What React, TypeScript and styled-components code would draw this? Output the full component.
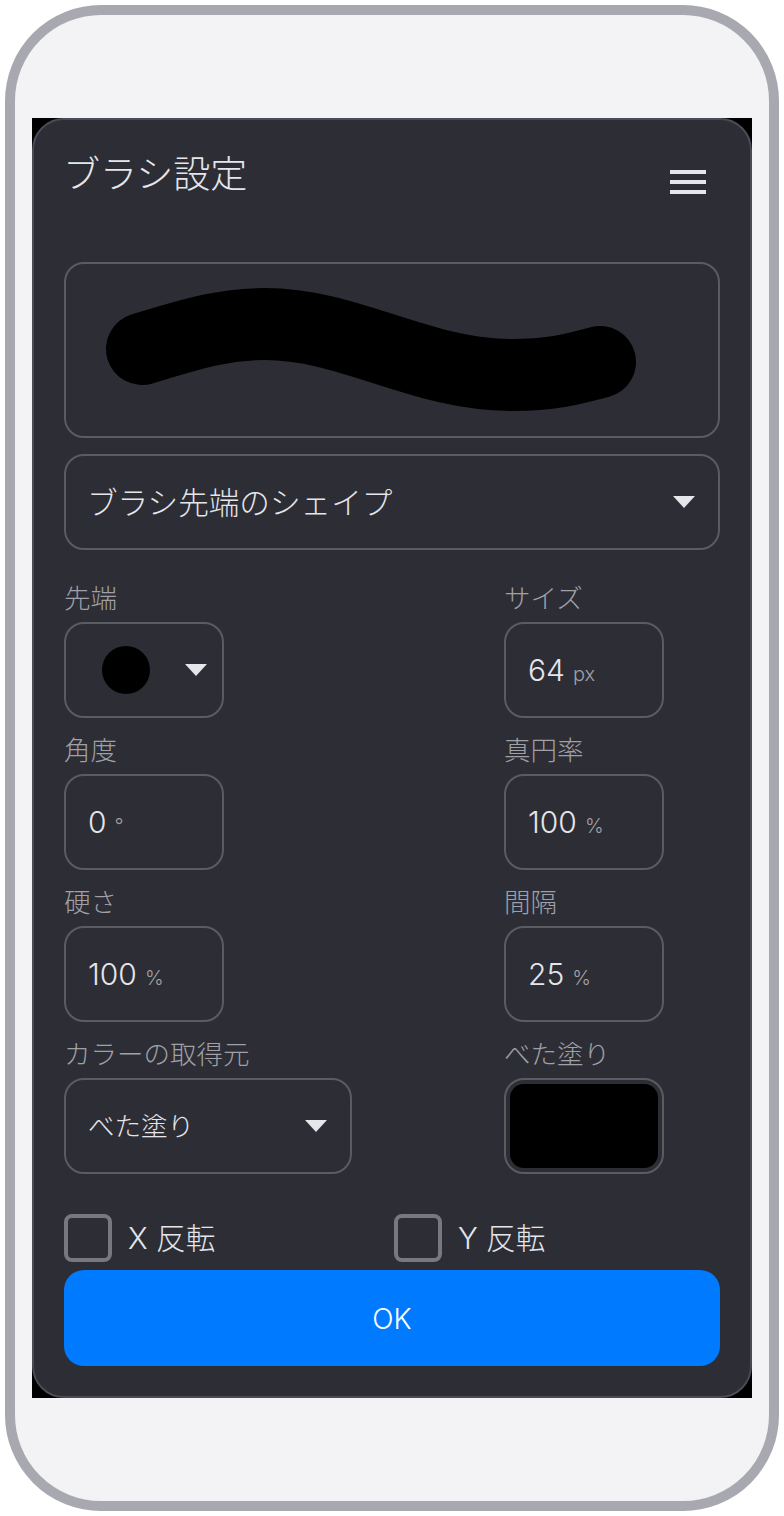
import React from "react";
import styled, { createGlobalStyle } from "styled-components";

const Global = createGlobalStyle`
  html, body { margin: 0; padding: 0; background: #fff; }
  body { font-family: Inter, "Noto Sans CJK JP", sans-serif; }
`;

const Phone = styled.div`
  box-sizing: border-box;
  width: 774px;
  height: 1506px;
  margin: 5px;
  border: 10px solid #a8a8b0;
  border-radius: 96px;
  background: #f3f3f6;
  padding-top: 103px;
  padding-left: 17px;
`;

const Backdrop = styled.div`
  width: 720px;
  height: 1280px;
  background: #000;
`;

const Panel = styled.div`
  box-sizing: border-box;
  height: 100%;
  display: flex;
  flex-direction: column;
  padding: 0 30px;
  background: #2c2d35;
  border: 2px solid #4a4b57;
  border-radius: 32px;
`;

const Header = styled.header`
  height: 142px;
  flex: none;
  display: flex;
  justify-content: space-between;
  align-items: flex-start;
`;

const Title = styled.h1`
  margin: 33px 0 0 -1px;
  font-size: 37px;
  line-height: 44px;
  font-weight: 300;
  color: #e5e5ea;
`;

const Burger = styled.div`
  width: 36px;
  height: 24px;
  margin: 50px 14px 0 0;
  display: flex;
  flex-direction: column;
  justify-content: space-between;
  & > i { display: block; height: 4px; background: #e5e5ea; }
`;

const Preview = styled.div`
  box-sizing: border-box;
  height: 176px;
  flex: none;
  border: 2px solid #5a5b63;
  border-radius: 20px;
  overflow: hidden;
  & > svg { display: block; margin: -2px; }
`;

const Caret = styled.span`
  width: 0;
  height: 0;
  flex: none;
  border-left: 11.5px solid transparent;
  border-right: 11.5px solid transparent;
  border-top: 12px solid #e5e5ea;
`;

const ShapeSelect = styled.div`
  box-sizing: border-box;
  height: 96px;
  flex: none;
  margin-top: 16px;
  padding: 0 23px 0 21px;
  display: flex;
  align-items: center;
  justify-content: space-between;
  border: 2px solid #5a5b63;
  border-radius: 20px;
  font-size: 30.6px;
  font-weight: 300;
  color: #e5e5ea;
`;

const ShapeText = styled.span`
  margin-bottom: 3px;
`;

const Grid = styled.div`
  margin-top: 30px;
  display: grid;
  grid-template-columns: 440px 216px;
  row-gap: 14px;
`;

const Cell = styled.div`
  display: flex;
  flex-direction: column;
  align-items: flex-start;
`;

const Label = styled.label`
  height: 36px;
  margin-bottom: 6px;
  font-size: 26.5px;
  line-height: 36px;
  font-weight: 300;
  color: #a0a0a6;
  white-space: nowrap;
`;

const Field = styled.div<{ $w?: number }>`
  box-sizing: border-box;
  width: ${(p) => p.$w ?? 160}px;
  height: 96px;
  padding: 0 22px;
  display: flex;
  align-items: center;
  justify-content: space-between;
  border: 2px solid #5a5b63;
  border-radius: 20px;
  color: #e5e5ea;
`;

const Value = styled.div`
  display: flex;
  align-items: baseline;
  gap: 8px;
  font-size: 30px;
  font-weight: 350;
`;

const Unit = styled.span`
  font-size: 20px;
  font-weight: 300;
  color: #a0a0a6;
`;

const Tip = styled.span`
  width: 48px;
  height: 48px;
  margin-left: 14px;
  border-radius: 50%;
  background: #000;
`;

const TipField = styled(Field)`
  padding-right: 15px;
`;

const SourceField = styled(Field)`
  padding-right: 23px;
`;

const SourceText = styled.span`
  margin-bottom: 3px;
  font-size: 26.5px;
  font-weight: 300;
`;

const Swatch = styled.div`
  box-sizing: border-box;
  width: 160px;
  height: 96px;
  padding: 4px;
  border: 2px solid #5a5b63;
  border-radius: 20px;
  & > div { height: 100%; background: #000; border-radius: 14px; }
`;

const Checks = styled.div`
  margin-top: 40px;
  display: flex;
`;

const CheckItem = styled.div`
  flex: none;
  width: 330px;
  display: flex;
  align-items: center;
  gap: 16px;
  font-size: 29.7px;
  font-weight: 300;
  color: #e5e5ea;
  &:last-child { width: 326px; }
`;

const CheckText = styled.span`
  margin-bottom: 4px;
`;

const Box = styled.span`
  box-sizing: border-box;
  width: 48px;
  height: 48px;
  border: 4px solid #78787e;
  border-radius: 8px;
`;

const Ok = styled.button`
  height: 96px;
  flex: none;
  margin-top: 8px;
  padding: 2px 0 0;
  border: 0;
  border-radius: 20px;
  background: #007aff;
  color: #fff;
  font-family: inherit;
  font-size: 28px;
  font-weight: 350;
`;

const NumberField = ({ label, value, unit }: { label: string; value: string; unit: string }) => (
  <Cell>
    <Label>{label}</Label>
    <Field>
      <Value>
        {value}
        <Unit>{unit}</Unit>
      </Value>
    </Field>
  </Cell>
);

export default function App() {
  return (
    <>
      <Global />
      <Phone>
        <Backdrop>
          <Panel>
            <Header>
              <Title>ブラシ設定</Title>
              <Burger>
                <i />
                <i />
                <i />
              </Burger>
            </Header>
            <Preview>
              <svg width="656" height="176" viewBox="64 262 656 176">
                <path
                  d="M142 349 C200 331 228 324 265 324 C350 324 420 375 512 375 C550 375 570 370 600 362"
                  fill="none"
                  stroke="#000"
                  strokeWidth="72"
                  strokeLinecap="round"
                />
              </svg>
            </Preview>
            <ShapeSelect>
              <ShapeText>ブラシ先端のシェイプ</ShapeText>
              <Caret />
            </ShapeSelect>
            <Grid>
              <Cell>
                <Label>先端</Label>
                <TipField>
                  <Tip />
                  <Caret />
                </TipField>
              </Cell>
              <NumberField label="サイズ" value="64" unit="px" />
              <NumberField label="角度" value="0" unit="°" />
              <NumberField label="真円率" value="100" unit="%" />
              <NumberField label="硬さ" value="100" unit="%" />
              <NumberField label="間隔" value="25" unit="%" />
              <Cell>
                <Label>カラーの取得元</Label>
                <SourceField $w={288}>
                  <SourceText>べた塗り</SourceText>
                  <Caret />
                </SourceField>
              </Cell>
              <Cell>
                <Label>べた塗り</Label>
                <Swatch>
                  <div />
                </Swatch>
              </Cell>
            </Grid>
            <Checks>
              <CheckItem>
                <Box />
                <CheckText>X 反転</CheckText>
              </CheckItem>
              <CheckItem>
                <Box />
                <CheckText>Y 反転</CheckText>
              </CheckItem>
            </Checks>
            <Ok>OK</Ok>
          </Panel>
        </Backdrop>
      </Phone>
    </>
  );
}
